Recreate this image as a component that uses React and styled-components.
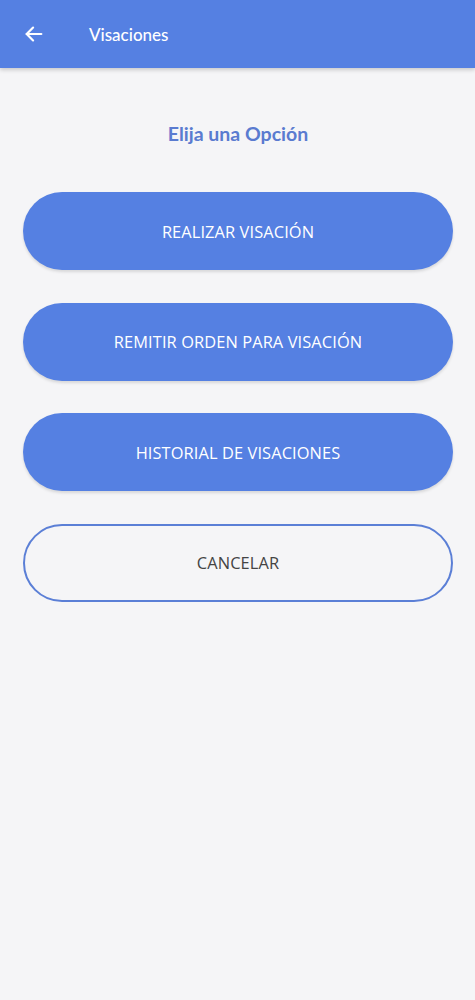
import React from 'react';
import styled, { createGlobalStyle } from 'styled-components';

const GlobalStyle = createGlobalStyle`
  html, body {
    margin: 0;
    padding: 0;
    background: #f5f5f7;
    font-family: Lato, "Open Sans", "Liberation Sans", sans-serif;
  }
`;

const Page = styled.div`
  min-height: 1000px;
  background: #f5f5f7;
`;

const Toolbar = styled.header`
  height: 68px;
  background: #5580e2;
  display: flex;
  align-items: center;
  padding-left: 22px;
  box-shadow: 0 2px 4px rgba(0, 0, 0, 0.18);
`;

const BackButton = styled.button`
  border: 0;
  background: none;
  padding: 0;
  width: 24px;
  height: 24px;
  display: flex;
  align-items: center;
  justify-content: center;
  cursor: pointer;
`;

const Title = styled.h1`
  margin: 0 0 0 43px;
  color: #fff;
  font-size: 17px;
  font-weight: 500;
  font-family: Lato, "Open Sans", sans-serif;
`;

const Content = styled.main`
  display: flex;
  flex-direction: column;
  padding: 0 22px 0 23px;
`;

const Heading = styled.h2`
  margin: 52px 0 44px;
  text-align: center;
  color: #5a7bd0;
  font-size: 19.5px;
  font-weight: 700;
  line-height: 28px;
`;

const Options = styled.div`
  display: flex;
  flex-direction: column;
  gap: 32.6px;
`;

const OptionButton = styled.button`
  height: 78px;
  border-radius: 39px;
  border: ${p => (p.$outline ? '2px solid #5b7fd6' : '0')};
  background: ${p => (p.$outline ? 'transparent' : '#5580e2')};
  color: ${p => (p.$outline ? '#444' : '#fff')};
  font-family: "Open Sans", Lato, sans-serif;
  font-size: 16.4px;
  letter-spacing: 0.1px;
  box-shadow: ${p => (p.$outline ? 'none' : '0 2px 3px rgba(0,0,0,0.12)')};
  cursor: pointer;
`;

const options = ['REALIZAR VISACIÓN', 'REMITIR ORDEN PARA VISACIÓN', 'HISTORIAL DE VISACIONES'];

export default function App() {
  return (
    <Page>
      <GlobalStyle />
      <Toolbar>
        <BackButton aria-label="Volver">
          <svg width="22" height="22" viewBox="0 0 24 24" fill="none" stroke="#fff" strokeWidth="2.4" strokeLinecap="round" strokeLinejoin="round">
            <path d="M20 12H4" />
            <path d="M11 5l-7 7 7 7" />
          </svg>
        </BackButton>
        <Title>Visaciones</Title>
      </Toolbar>
      <Content>
        <Heading>Elija una Opción</Heading>
        <Options>
          {options.map(o => (
            <OptionButton key={o}>{o}</OptionButton>
          ))}
          <OptionButton $outline>CANCELAR</OptionButton>
        </Options>
      </Content>
    </Page>
  );
}
